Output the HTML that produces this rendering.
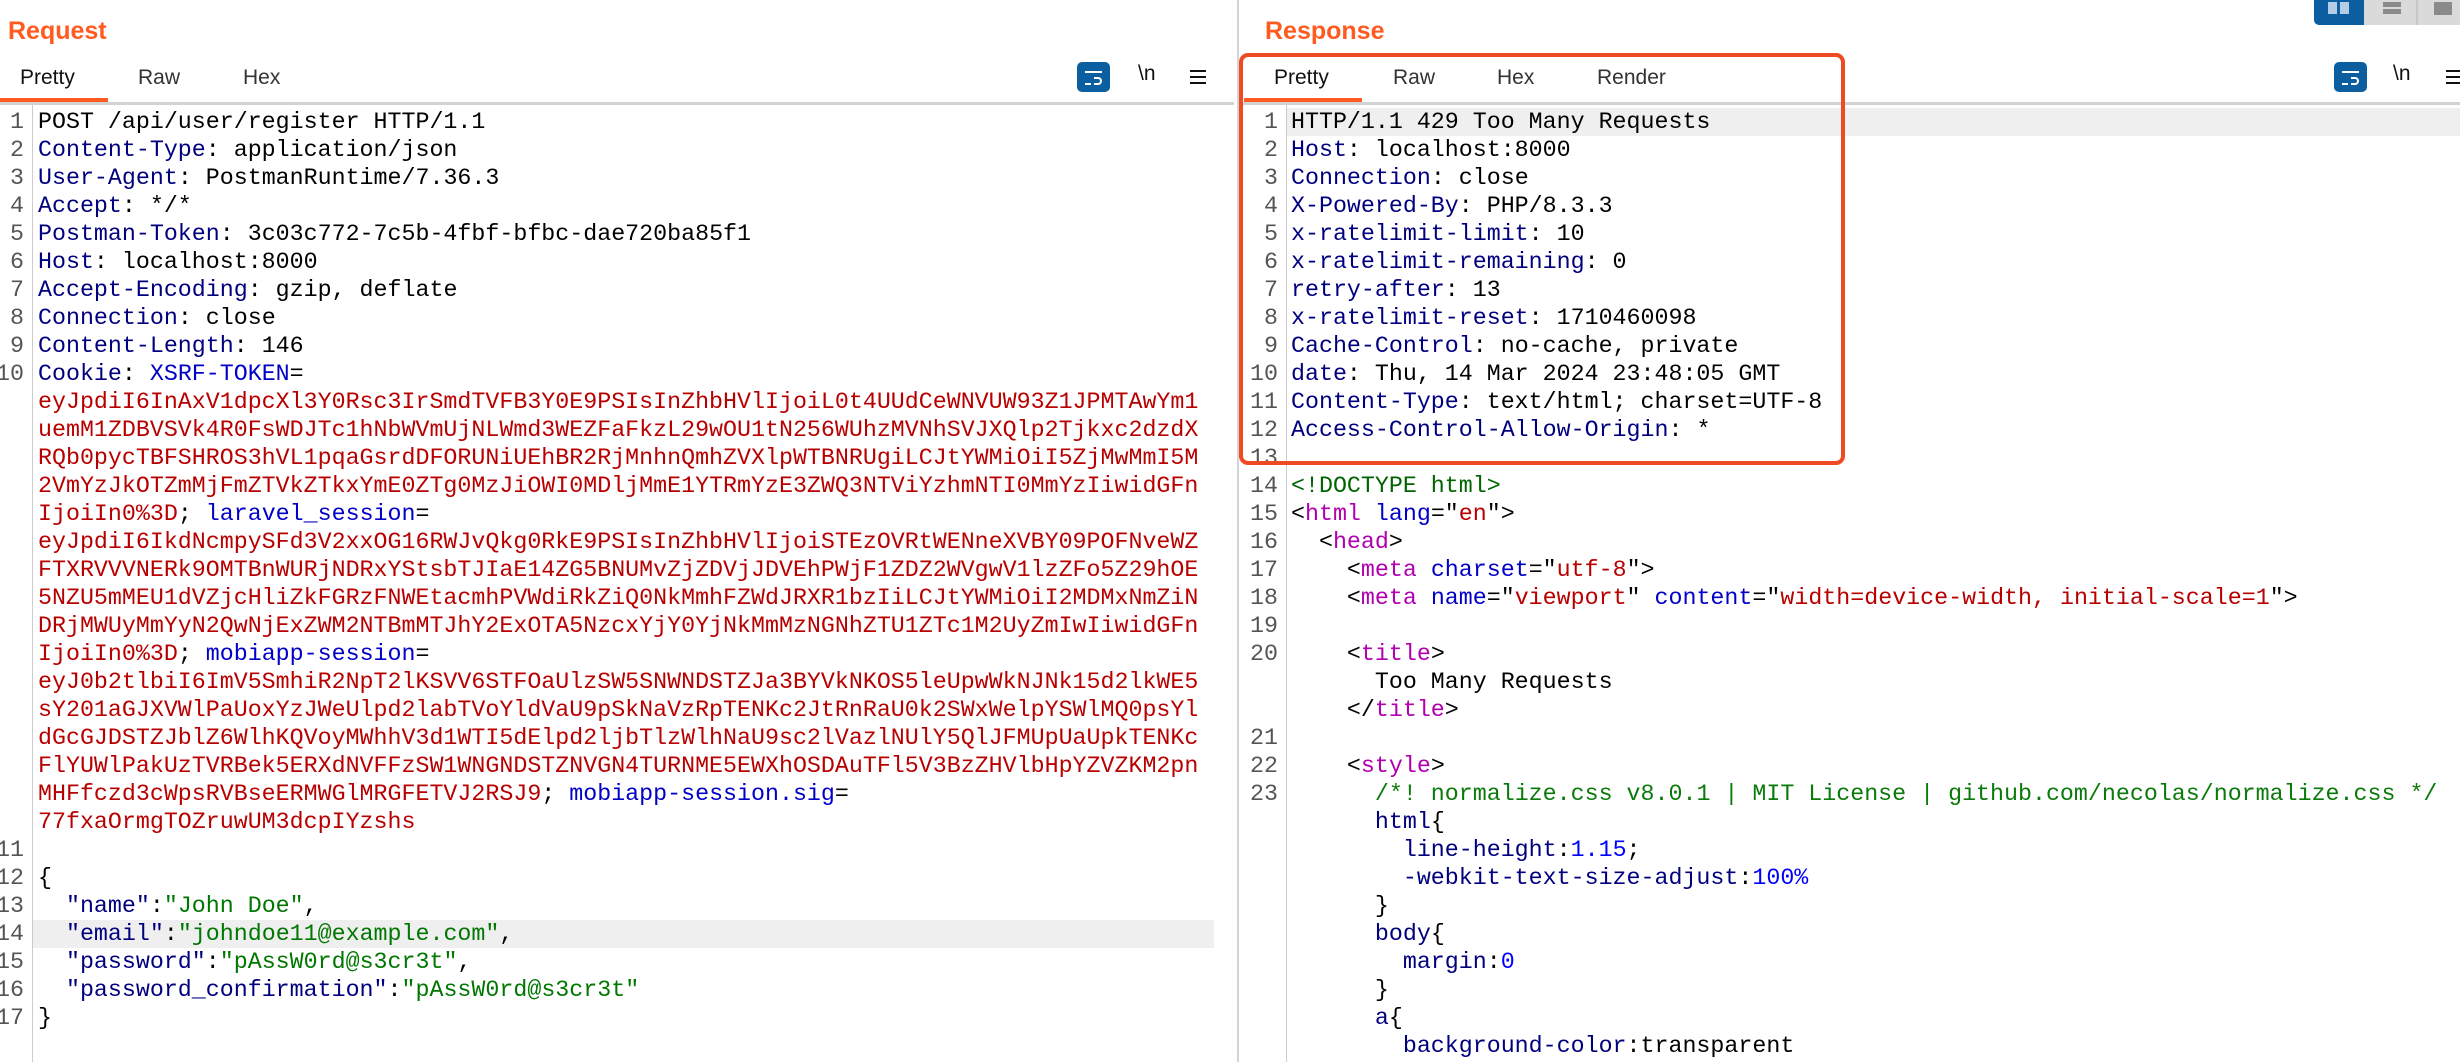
<!DOCTYPE html>
<html><head><meta charset="utf-8">
<style>
*{margin:0;padding:0;box-sizing:border-box}
html,body{width:2460px;height:1062px;overflow:hidden;background:#fff}
body{position:relative;font-family:"Liberation Sans",sans-serif}
.title{position:absolute;top:17px;font-size:25px;font-weight:bold;color:#ff5a1f}
.tab{position:absolute;top:66px;font-size:21px;color:#333}
.ul{position:absolute;top:98px;height:4px;background:#ff5a1f}
.sep{position:absolute;top:102px;height:3px;background:#d0d3d6}
pre{position:absolute;font-family:"Liberation Mono",monospace;font-size:23.3px;line-height:28px;white-space:pre;margin:0}
.num{color:#555;text-align:right}
.k{color:#00007f}.b{color:#0000c8}.r{color:#b80000}.g{color:#007700}.t{color:#b000b0}.n{color:#0000ff}.d{color:#006400}.c{color:#0a7a0a}
.gut{position:absolute;top:105px;bottom:0;width:1px;background:#ccc}
.hl{position:absolute;height:28px;background:#efefef}
.wrap{position:absolute;width:33px;height:30px;background:#0b5fa0;border-radius:5px}
.wrap i{position:absolute;left:8px;height:2px;background:#fff}
.wrap b{position:absolute;left:17px;top:15px;width:8px;height:8px;border:2px solid #fff;border-left:none;border-radius:0 4px 4px 0}
.nl{position:absolute;top:62px;font-size:21px;color:#111}
.ham{position:absolute;top:70px;width:16px;height:14px;border-top:2px solid #111;border-bottom:2px solid #111}
.ham:after{content:"";position:absolute;left:0;right:0;top:4px;height:2px;background:#111}
</style></head><body>
<div class="title" style="left:8px">Request</div>
<div class="tab" style="left:20px;color:#111">Pretty</div>
<div class="tab" style="left:138px">Raw</div>
<div class="tab" style="left:243px">Hex</div>
<div class="ul" style="left:0;width:108px"></div>
<div class="sep" style="left:0;width:1234px"></div>
<div class="wrap" style="left:1077px;top:62px"><i style="top:9px;width:17px"></i><b></b><i style="top:21px;width:6px"></i></div>
<div class="nl" style="left:1138px">\n</div>
<div class="ham" style="left:1190px"></div>

<div style="position:absolute;left:1237px;top:0;bottom:0;width:2px;background:#d4d4d4"></div>

<div class="title" style="left:1265px">Response</div>
<div class="tab" style="left:1274px;color:#111">Pretty</div>
<div class="tab" style="left:1393px">Raw</div>
<div class="tab" style="left:1497px">Hex</div>
<div class="tab" style="left:1597px">Render</div>
<div class="ul" style="left:1244px;width:118px"></div>
<div class="sep" style="left:1239px;width:1221px"></div>
<div class="wrap" style="left:2334px;top:62px"><i style="top:9px;width:17px"></i><b></b><i style="top:21px;width:6px"></i></div>
<div class="nl" style="left:2393px">\n</div>
<div class="ham" style="left:2446px"></div>

<div style="position:absolute;left:2314px;top:0;width:50px;height:25px;background:#0b5fa0;border-radius:0 0 0 5px"></div>
<div style="position:absolute;left:2328px;top:2px;width:9px;height:12px;background:#b4cde4"></div>
<div style="position:absolute;left:2340px;top:2px;width:9px;height:12px;background:#b4cde4"></div>
<div style="position:absolute;left:2364px;top:0;width:96px;height:25px;background:#dadada"></div>
<div style="position:absolute;left:2416px;top:0;width:2px;height:25px;background:#c8c8c8"></div>
<div style="position:absolute;left:2383px;top:2px;width:18px;height:5px;background:#8a8a8a"></div>
<div style="position:absolute;left:2383px;top:9px;width:18px;height:5px;background:#8a8a8a"></div>
<div style="position:absolute;left:2434px;top:2px;width:18px;height:13px;background:#8a8a8a"></div>

<!-- left editor -->
<div class="hl" style="left:33px;top:920px;width:1181px"></div>
<div class="gut" style="left:32px"></div>
<pre class="num" style="left:-10px;top:108px;width:34px">1
2
3
4
5
6
7
8
9
10
















11
12
13
14
15
16
17</pre>
<pre style="left:38px;top:108px">POST /api/user/register HTTP/1.1
<span class="k">Content-Type</span>: application/json
<span class="k">User-Agent</span>: PostmanRuntime/7.36.3
<span class="k">Accept</span>: */*
<span class="k">Postman-Token</span>: 3c03c772-7c5b-4fbf-bfbc-dae720ba85f1
<span class="k">Host</span>: localhost:8000
<span class="k">Accept-Encoding</span>: gzip, deflate
<span class="k">Connection</span>: close
<span class="k">Content-Length</span>: 146
<span class="k">Cookie</span>: <span class="b">XSRF-TOKEN</span>=
<span class="r">eyJpdiI6InAxV1dpcXl3Y0Rsc3IrSmdTVFB3Y0E9PSIsInZhbHVlIjoiL0t4UUdCeWNVUW93Z1JPMTAwYm1
uemM1ZDBVSVk4R0FsWDJTc1hNbWVmUjNLWmd3WEZFaFkzL29wOU1tN256WUhzMVNhSVJXQlp2Tjkxc2dzdX
RQb0pycTBFSHROS3hVL1pqaGsrdDFORUNiUEhBR2RjMnhnQmhZVXlpWTBNRUgiLCJtYWMiOiI5ZjMwMmI5M
2VmYzJkOTZmMjFmZTVkZTkxYmE0ZTg0MzJiOWI0MDljMmE1YTRmYzE3ZWQ3NTViYzhmNTI0MmYzIiwidGFn
IjoiIn0%3D</span>; <span class="b">laravel_session</span>=
<span class="r">eyJpdiI6IkdNcmpySFd3V2xxOG16RWJvQkg0RkE9PSIsInZhbHVlIjoiSTEzOVRtWENneXVBY09POFNveWZ
FTXRVVVNERk9OMTBnWURjNDRxYStsbTJIaE14ZG5BNUMvZjZDVjJDVEhPWjF1ZDZ2WVgwV1lzZFo5Z29hOE
5NZU5mMEU1dVZjcHliZkFGRzFNWEtacmhPVWdiRkZiQ0NkMmhFZWdJRXR1bzIiLCJtYWMiOiI2MDMxNmZiN
DRjMWUyMmYyN2QwNjExZWM2NTBmMTJhY2ExOTA5NzcxYjY0YjNkMmMzNGNhZTU1ZTc1M2UyZmIwIiwidGFn
IjoiIn0%3D</span>; <span class="b">mobiapp-session</span>=
<span class="r">eyJ0b2tlbiI6ImV5SmhiR2NpT2lKSVV6STFOaUlzSW5SNWNDSTZJa3BYVkNKOS5leUpwWkNJNk15d2lkWE5
sY201aGJXVWlPaUoxYzJWeUlpd2labTVoYldVaU9pSkNaVzRpTENKc2JtRnRaU0k2SWxWelpYSWlMQ0psYl
dGcGJDSTZJblZ6WlhKQVoyMWhhV3d1WTI5dElpd2ljbTlzWlhNaU9sc2lVazlNUlY5QlJFMUpUaUpkTENKc
FlYUWlPakUzTVRBek5ERXdNVFFzSW1WNGNDSTZNVGN4TURNME5EWXhOSDAuTFl5V3BzZHVlbHpYZVZKM2pn
MHFfczd3cWpsRVBseERMWGlMRGFETVJ2RSJ9</span>; <span class="b">mobiapp-session.sig</span>=
<span class="r">77fxaOrmgTOZruwUM3dcpIYzshs</span>

{
  <span class="k">"name"</span>:<span class="g">"John Doe"</span>,
  <span class="k">"email"</span>:<span class="g">"johndoe11@example.com"</span>,
  <span class="k">"password"</span>:<span class="g">"pAssW0rd@s3cr3t"</span>,
  <span class="k">"password_confirmation"</span>:<span class="g">"pAssW0rd@s3cr3t"</span>
}</pre>

<!-- right editor -->
<div class="hl" style="left:1287px;top:108px;width:1173px"></div>
<div class="gut" style="left:1286px"></div>
<pre class="num" style="left:1240px;top:108px;width:38px">1
2
3
4
5
6
7
8
9
10
11
12
13
14
15
16
17
18
19
20


21
22
23</pre>
<pre style="left:1291px;top:108px">HTTP/1.1 429 Too Many Requests
<span class="k">Host</span>: localhost:8000
<span class="k">Connection</span>: close
<span class="k">X-Powered-By</span>: PHP/8.3.3
<span class="k">x-ratelimit-limit</span>: 10
<span class="k">x-ratelimit-remaining</span>: 0
<span class="k">retry-after</span>: 13
<span class="k">x-ratelimit-reset</span>: 1710460098
<span class="k">Cache-Control</span>: no-cache, private
<span class="k">date</span>: Thu, 14 Mar 2024 23:48:05 GMT
<span class="k">Content-Type</span>: text/html; charset=UTF-8
<span class="k">Access-Control-Allow-Origin</span>: *

<span class="d">&lt;!DOCTYPE html&gt;</span>
&lt;<span class="t">html</span> <span class="b">lang</span>="<span class="r">en</span>"&gt;
  &lt;<span class="t">head</span>&gt;
    &lt;<span class="t">meta</span> <span class="b">charset</span>="<span class="r">utf-8</span>"&gt;
    &lt;<span class="t">meta</span> <span class="b">name</span>="<span class="r">viewport</span>" <span class="b">content</span>="<span class="r">width=device-width, initial-scale=1</span>"&gt;

    &lt;<span class="t">title</span>&gt;
      Too Many Requests
    &lt;/<span class="t">title</span>&gt;

    &lt;<span class="t">style</span>&gt;
      <span class="c">/*! normalize.css v8.0.1 | MIT License | github.com/necolas/normalize.css */</span>
      <span class="k">html</span>{
        <span class="k">line-height</span>:<span class="n">1.15</span>;
        <span class="k">-webkit-text-size-adjust</span>:<span class="n">100%</span>
      }
      <span class="k">body</span>{
        <span class="k">margin</span>:<span class="n">0</span>
      }
      <span class="k">a</span>{
        <span class="k">background-color</span>:transparent</pre>

<div style="position:absolute;left:1239px;top:53px;width:606px;height:412px;border:4px solid #f04a24;border-radius:9px"></div>
</body></html>
